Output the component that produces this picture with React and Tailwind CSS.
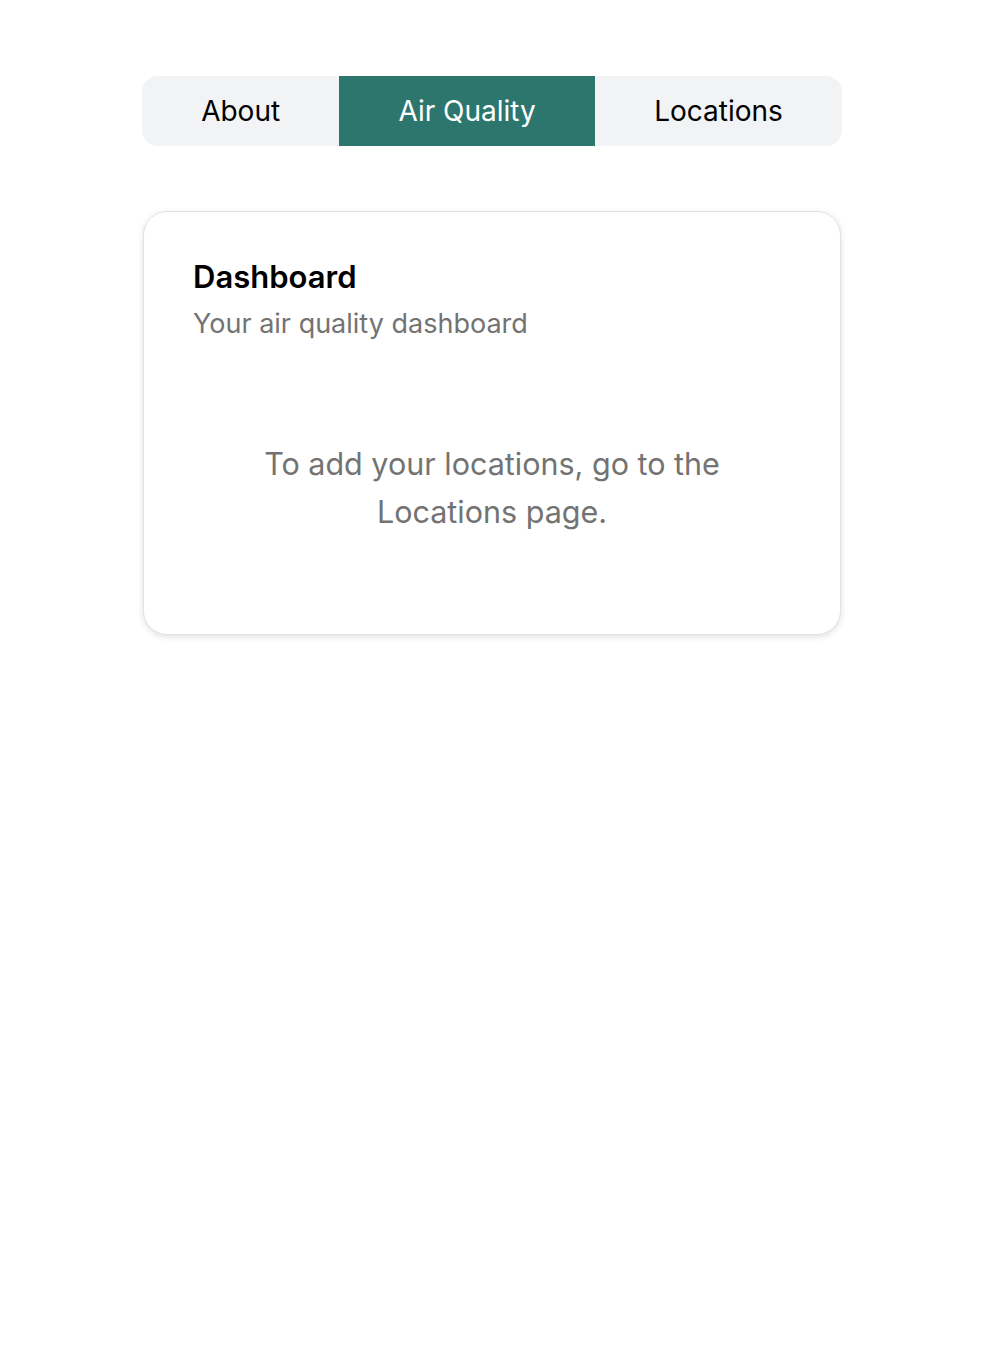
import React, { useState } from 'react';

const tabs = ['About', 'Air Quality', 'Locations'];

const App = () => {
  const [active, setActive] = useState('Air Quality');

  return (
    <div className="min-h-screen bg-white font-['Inter',sans-serif]">
      <div className="w-[700px] ml-[142px] pt-[76px]">
        <div className="flex h-[70px] rounded-2xl bg-[#f2f3f5] overflow-hidden">
          {tabs.map(tab => (
            <button
              key={tab}
              onClick={() => setActive(tab)}
              className={`grow text-[28px] ${active === tab ? 'bg-[#2d766d] text-white' : 'text-black'}`}
            >
              {tab}
            </button>
          ))}
        </div>

        <div className="mt-[65px] mx-px rounded-3xl border border-[#e2e2e2] bg-white shadow-[0_2px_6px_rgba(0,0,0,0.12)] px-[49px] pt-[45px] pb-[98px]">
          <h2 className="text-[31px] font-semibold text-black leading-[40px]">Dashboard</h2>
          <p className="text-[27px] text-[#737373] leading-[36px] mt-[9px]">Your air quality dashboard</p>
          <p className="mt-[98px] text-center text-[30.5px] text-[#737373] leading-[48px] px-[50px]">
            To add your locations, go to the Locations page.
          </p>
        </div>
      </div>
    </div>
  );
};

export default App;
